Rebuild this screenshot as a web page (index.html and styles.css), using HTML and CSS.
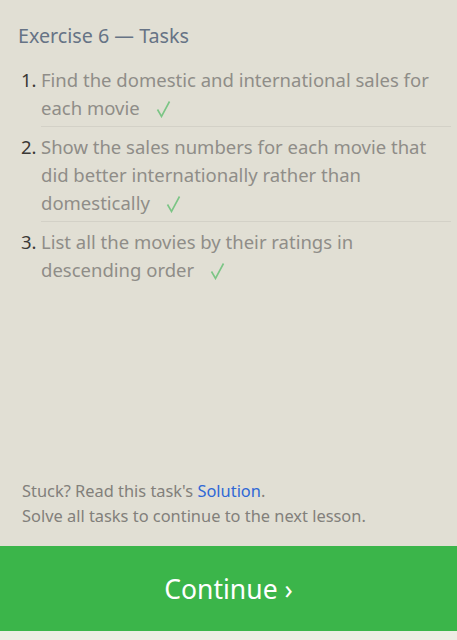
FILE: index.html
```html
<!DOCTYPE html>
<html>
<head>
<meta charset="utf-8">
<link rel="stylesheet" href="styles.css">
</head>
<body>
<div class="page">
  <div class="content">
    <h2 class="title">Exercise 6 — Tasks</h2>
    <ol class="tasks">
      <li class="task"><span class="num">1.</span><span class="text">Find the domestic and international sales for each movie<svg class="check" viewBox="0 0 16 18" width="16" height="18"><polyline points="1.5,9.5 5.5,16.5 13.5,1.5"/></svg></span></li>
      <li class="task"><span class="num">2.</span><span class="text">Show the sales numbers for each movie that did better internationally rather than domestically<svg class="check" viewBox="0 0 16 18" width="16" height="18"><polyline points="1.5,9.5 5.5,16.5 13.5,1.5"/></svg></span></li>
      <li class="task"><span class="num">3.</span><span class="text">List all the movies by their ratings in descending order<svg class="check" viewBox="0 0 16 18" width="16" height="18"><polyline points="1.5,9.5 5.5,16.5 13.5,1.5"/></svg></span></li>
    </ol>
  </div>
  <div class="footer">
    <p>Stuck? Read this task's <a href="#" class="link">Solution</a>.</p>
    <p>Solve all tasks to continue to the next lesson.</p>
  </div>
  <div class="continue">Continue ›</div>
  <div class="strip"></div>
</div>
</body>
</html>
```
FILE: styles.css
```css
html, body {
  margin: 0;
  padding: 0;
  background: #e1dfd4;
}
.page {
  height: 640px;
  display: flex;
  flex-direction: column;
  font-family: "Noto Sans", "Open Sans", sans-serif;
}
.content {
  flex: 1;
  padding: 22px 6px 0 18px;
}
.title {
  margin: 0;
  font-size: 19.7px;
  font-weight: normal;
  color: #667385;
  line-height: 28px;
}
.tasks {
  list-style: none;
  margin: 10px 0 0 0;
  padding: 0;
}
.task {
  display: flex;
  font-size: 18.5px;
  line-height: 28px;
  color: #8f8d88;
  padding: 6px 0 4px;
}
.num {
  width: 20px;
  flex: none;
  padding-left: 3px;
  color: #3a3836;
}
.text {
  flex: 1;
  border-bottom: 1px solid #d3d1c7;
  padding-bottom: 4px;
  margin-bottom: -4px;
}
.task:last-child .text {
  border-bottom: none;
}
.check {
  display: inline-block;
  vertical-align: -3px;
  margin-left: 16px;
  fill: none;
  stroke: #7bc585;
  stroke-width: 1.6;
}
.footer {
  padding: 0 22px 18px;
  font-size: 16.4px;
  line-height: 25px;
  color: #82807b;
}
.footer p {
  margin: 0;
}
.link {
  color: #2f68d6;
  text-decoration: none;
}
.continue {
  height: 85px;
  background: #3bb54a;
  color: #ffffff;
  font-size: 26.5px;
  display: flex;
  align-items: center;
  justify-content: center;
}
.strip {
  height: 9px;
  background: #efece5;
}
```
